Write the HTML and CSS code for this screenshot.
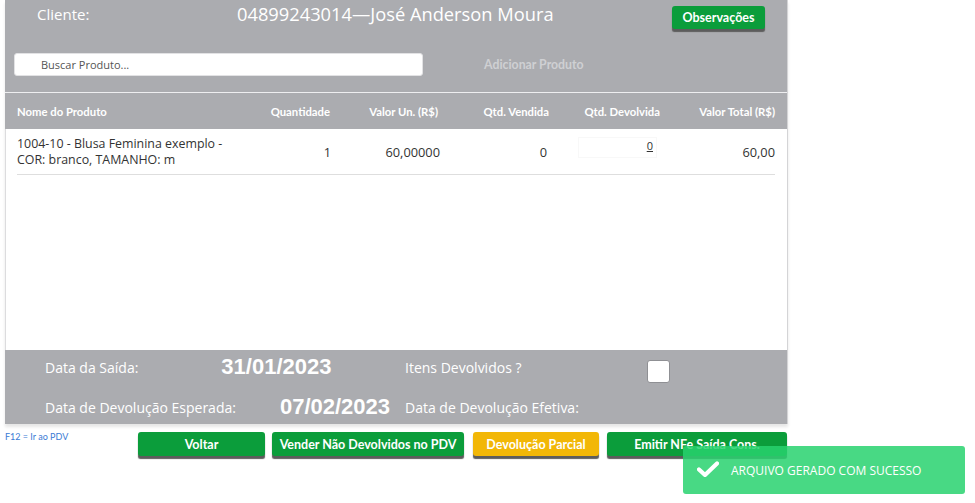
FILE: index.html
```html
<!DOCTYPE html>
<html lang="pt-BR">
<head>
<meta charset="utf-8">
<title>Devolução</title>
<link rel="stylesheet" href="styles.css">
</head>
<body>
<div class="panel">
  <div class="top">
    <div class="row1">
      <div class="lbl">Cliente:</div>
      <div class="client">04899243014—José Anderson Moura</div>
      <button class="btn btn-green btn-obs">Observações</button>
    </div>
    <div class="row2">
      <div class="search">Buscar Produto...</div>
      <div class="add">Adicionar Produto</div>
    </div>
  </div>
  <div class="grid thead">
    <div>Nome do Produto</div>
    <div class="r">Quantidade</div>
    <div class="r">Valor Un. (R$)</div>
    <div class="r">Qtd. Vendida</div>
    <div class="r">Qtd. Devolvida</div>
    <div class="r last">Valor Total (R$)</div>
  </div>
  <div class="body">
    <div class="grid trow">
      <div class="pname"><div>1004-10 - Blusa Feminina exemplo -</div><div>COR: branco, TAMANHO: m</div></div>
      <div class="r c2">1</div>
      <div class="r c3">60,00000</div>
      <div class="r c4">0</div>
      <div class="c5"><div class="dev"><span>0</span></div></div>
      <div class="r last">60,00</div>
    </div>
  </div>
  <div class="foot">
    <div class="frow">
      <div class="half">
        <span class="flbl">Data da Saída:</span>
        <span class="fval v1">31/01/2023</span>
      </div>
      <span class="flbl itens">Itens Devolvidos ?</span>
      <span class="check"></span>
    </div>
    <div class="frow">
      <div class="half">
        <span class="flbl">Data de Devolução Esperada:</span>
        <span class="fval v2">07/02/2023</span>
      </div>
      <span class="flbl">Data de Devolução Efetiva:</span>
    </div>
  </div>
</div>
<div class="actions">
  <a class="f12">F12 = Ir ao PDV</a>
  <button class="btn btn-green b-voltar">Voltar</button>
  <button class="btn btn-green b-vender">Vender Não Devolvidos no PDV</button>
  <button class="btn btn-yellow b-parcial">Devolução Parcial</button>
  <button class="btn btn-green b-emitir">Emitir NFe Saída Cons.</button>
</div>
<div class="toast">
  <svg class="tick" width="22" height="16" viewBox="0 0 22 16"><path d="M2 8.5 L8 14 L20 2.5" fill="none" stroke="#fff" stroke-width="4.2" stroke-linecap="round" stroke-linejoin="round"/></svg>
  <span>ARQUIVO GERADO COM SUCESSO</span>
</div>
</body>
</html>
```
FILE: styles.css
```css
* { box-sizing: border-box; }
body {
  margin: 0;
  background: #fff;
  font-family: "Open Sans", "DejaVu Sans", sans-serif;
  width: 975px;
  height: 503px;
  overflow: hidden;
  position: relative;
}
.panel {
  margin-left: 5px;
  width: 783px;
  border-right: 1px solid #d4d4d6;
  box-shadow: 0 3px 3px rgba(0,0,0,0.10);
}
.top {
  background: #abacb0;
  height: 93px;
  border-bottom: 1px solid #eeeef0;
}
.row1 {
  display: flex;
  height: 40px;
}
.lbl {
  width: 200px;
  margin-left: 32px;
  margin-top: 3px;
  font-size: 15px;
  line-height: 22px;
  color: #fff;
}
.client {
  margin-top: 2px;
  font-size: 18.3px;
  line-height: 24px;
  color: #fff;
}
.btn {
  border: none;
  border-radius: 3px;
  font-family: Lato, "Open Sans", sans-serif;
  font-weight: 700;
  font-size: 12.5px;
  color: #fff;
  height: 24px;
  padding: 0;
  box-shadow: 0 3px 1px -0.5px #5c5c5c;
  cursor: pointer;
}
.btn-green { background: #0b9d3b; }
.btn-yellow { background: #f2b707; }
.btn-obs {
  margin-left: auto;
  margin-right: 22px;
  margin-top: 6px;
  width: 93px;
  height: 23px;
}
.row2 {
  display: flex;
  align-items: center;
  margin-top: 13px;
}
.search {
  margin-left: 9px;
  width: 409px;
  height: 23px;
  background: #fff;
  border-radius: 3px;
  border: 1px solid #e2e2e4;
  font-size: 11px;
  line-height: 21px;
  color: #555;
  padding-left: 26px;
}
.add {
  margin-left: 61px;
  font-family: Lato, sans-serif;
  font-weight: 700;
  font-size: 12.3px;
  color: #cfd0d3;
}
.grid {
  display: grid;
  grid-template-columns: 233px 85px 108px 111px 111px 110px;
  align-items: center;
}
.thead {
  background: #abacb0;
  height: 36px;
  padding: 0 12px;
  font-family: Lato, sans-serif;
  font-weight: 700;
  font-size: 11.3px;
  color: #fff;
}
.thead .r { text-align: right; padding-right: 5px; }
.thead .last { padding-right: 0; }
.body {
  height: 221px;
  background: #fff;
  border-left: 1px solid #dcdcde;
  padding: 0 12px 0 11px;
}
.trow {
  height: 46px;
  border-bottom: 1px solid #dedede;
  color: #333;
  font-size: 12.8px;
}
.pname {
  display: flex;
  flex-direction: column;
  font-size: 12.4px;
  line-height: 16px;
}
.trow .r { text-align: right; }
.c2 { padding-right: 4px; }
.c3 { padding-right: 3px; }
.c4 { padding-right: 7px; }
.last { padding-right: 0; }
.c5 { padding-left: 24px; }
.dev {
  width: 79px;
  height: 21px;
  border: 1px solid #f8f8f8;
  text-align: right;
  padding-right: 3px;
  margin-top: -9px;
  line-height: 15px;
  color: #333;
}
.dev span { text-decoration: underline; font-size: 11px; }
.foot {
  background: #abacb0;
  height: 74px;
  padding-top: 4px;
  color: #fff;
}
.frow {
  display: flex;
  align-items: center;
  height: 26px;
  margin-bottom: 14px;
}
.half {
  width: 400px;
  padding-left: 40px;
  display: flex;
  align-items: center;
}
.flbl {
  font-size: 14px;
}
.fval {
  font-family: "Liberation Sans", Arial, sans-serif;
  font-weight: 700;
  font-size: 22px;
}
.v1 { margin-left: 83px; }
.v2 { margin-left: 44px; }
.itens { width: 242px; }
.check {
  width: 23px;
  height: 23px;
  background: #fff;
  border: 1px solid #8f9094;
  border-radius: 3px;
  margin-top: 9px;
}
.actions {
  display: flex;
  align-items: flex-start;
  margin-top: 8px;
  height: 30px;
}
.f12 {
  margin-left: 5px;
  margin-top: -1px;
  width: 133px;
  font-family: Lato, sans-serif;
  font-size: 9px;
  color: #3a7bd5;
}
.b-voltar { width: 127px; }
.b-vender { width: 192px; margin-left: 7px; }
.b-parcial { width: 126px; margin-left: 9px; }
.b-emitir { width: 180px; margin-left: 8px; }
.toast {
  position: absolute;
  left: 683px;
  top: 446px;
  width: 282px;
  height: 48px;
  border-radius: 3px;
  background: rgba(40, 210, 110, 0.85);
  display: flex;
  align-items: center;
  padding-left: 14px;
  color: #fff;
  font-size: 12px;
}
.tick { margin-right: 12px; margin-top: -2px; }
```
